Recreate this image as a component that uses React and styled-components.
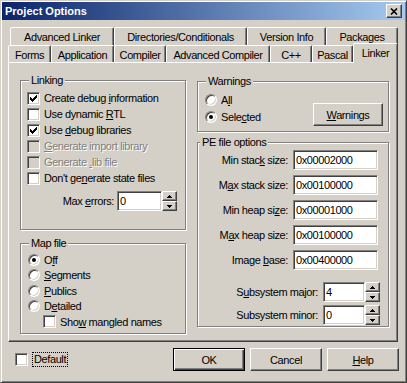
import React from "react";
import styled, { createGlobalStyle, css } from "styled-components";

const GlobalStyle = createGlobalStyle`
  html, body {
    margin: 0;
    padding: 0;
    background: #d4d0c8;
  }
  body {
    font-family: "Liberation Sans", Arial, sans-serif;
    font-size: 11px;
    letter-spacing: -0.4px;
    color: #000;
  }
  * {
    box-sizing: border-box;
  }
`;

// win2k bevels
const raised = css`
  border: 1px solid;
  border-color: #fff #404040 #404040 #fff;
  box-shadow: inset -1px -1px #808080, inset 1px 1px #d4d0c8;
`;

const sunken = css`
  border: 1px solid;
  border-color: #808080 #fff #fff #808080;
  box-shadow: inset 1px 1px #404040, inset -1px -1px #d4d0c8;
`;

const Window = styled.div`
  width: 407px;
  height: 383px;
  background: #d4d0c8;
  border: 1px solid;
  border-color: #d4d0c8 #404040 #404040 #d4d0c8;
  box-shadow: inset 1px 1px #fff, inset -1px -1px #808080;
  padding: 1px;
  display: flex;
  flex-direction: column;
`;

const TitleBar = styled.div`
  flex: none;
  height: 18px;
  display: flex;
  align-items: center;
  justify-content: space-between;
  padding: 0 3px 0 3px;
  background: linear-gradient(to right, #0a246a, #a6caf0);
  color: #fff;
  font-weight: bold;
  letter-spacing: 0;
`;

const CloseButton = styled.div`
  width: 16px;
  height: 14px;
  background: #d4d0c8;
  ${raised}
  display: flex;
  align-items: center;
  justify-content: center;
`;

const Body = styled.div`
  flex: 1;
  display: flex;
  flex-direction: column;
  padding: 7px 6px 0 6px;
`;

const TabRow = styled.div`
  display: flex;
  height: ${(p) => p.$h}px;
  padding-left: ${(p) => p.$indent || 0}px;
`;

const Tab = styled.div`
  flex: none;
  width: ${(p) => p.$w}px;
  height: 100%;
  display: flex;
  align-items: center;
  justify-content: center;
  padding-top: 1px;
  background: #d4d0c8;
  border: 1px solid;
  border-bottom: none;
  border-color: #fff #404040 transparent #fff;
  border-radius: 2px 2px 0 0;
  box-shadow: inset -1px 0 #808080;
  white-space: nowrap;

  ${(p) =>
    p.$active &&
    css`
      position: relative;
      z-index: 3;
      margin-top: -2px;
      height: calc(100% + 3px);
      padding-bottom: 2px;
    `}
`;

const Panel = styled.div`
  position: relative;
  z-index: 1;
  height: 280px;
  margin-right: 1px;
  border: 1px solid;
  border-color: #fff #404040 #404040 #fff;
  box-shadow: inset -1px -1px #808080;
  padding: 11px 8px 0 11px;
  display: grid;
  grid-template-columns: 166px 192px;
  column-gap: 11px;
  align-items: start;
`;

const Column = styled.div`
  display: flex;
  flex-direction: column;
`;

const Group = styled.fieldset`
  margin: ${(p) => p.$top || 0}px 0 0 0;
  padding: ${(p) => p.$pad};
  border: 1px solid #808080;
  box-shadow: 1px 1px 0 #fff, inset 1px 1px 0 #fff;
  min-width: 0;
`;

const Legend = styled.legend`
  padding: 0 2px;
  margin-left: 2px;
  line-height: 13px;
  background: #d4d0c8;
`;

const Option = styled.div`
  display: flex;
  align-items: center;
  gap: 4px;
  height: ${(p) => p.$h || 16}px;
  padding-left: ${(p) => p.$indent || 0}px;
  white-space: nowrap;
  color: ${(p) => (p.$disabled ? "#808080" : "#000")};
  text-shadow: ${(p) => (p.$disabled ? "1px 1px 0 #fff" : "none")};
`;

const CheckBox = styled.span`
  flex: none;
  width: 13px;
  height: 13px;
  ${sunken}
  background: ${(p) => (p.$disabled ? "#d4d0c8" : "#fff")};
  display: flex;
  align-items: center;
  justify-content: center;
`;

const RadioDot = styled.span`
  flex: none;
  width: 12px;
  height: 12px;
  margin-left: 1px;
  border-radius: 50%;
  border: 1px solid;
  border-color: #808080 #fff #fff #808080;
  box-shadow: inset 1px 1px #404040, inset -1px -1px #d4d0c8;
  background: #fff;
  display: flex;
  align-items: center;
  justify-content: center;

  &::after {
    content: "";
    display: ${(p) => (p.$on ? "block" : "none")};
    width: 4px;
    height: 4px;
    border-radius: 50%;
    background: #000;
  }
`;

const FieldRow = styled.div`
  display: flex;
  align-items: center;
  justify-content: flex-end;
  gap: ${(p) => p.$gap}px;
  height: 20px;
  margin-top: ${(p) => p.$top || 0}px;
  padding-right: ${(p) => p.$right}px;
  white-space: nowrap;
`;

const Field = styled.div`
  width: ${(p) => p.$w}px;
  height: 20px;
  ${sunken}
  background: #fff;
  padding: 0 2px;
  display: flex;
  align-items: center;
`;

const Spin = styled.div`
  display: flex;
  align-items: center;
`;

const Spinner = styled.div`
  width: 15px;
  height: 20px;
  display: flex;
  flex-direction: column;
`;

const SpinButton = styled.div`
  flex: 1;
  background: #d4d0c8;
  ${raised}
  display: flex;
  align-items: center;
  justify-content: center;
`;

const WarningsBody = styled.div`
  display: flex;
  align-items: flex-end;
  justify-content: space-between;
`;

const RadioStack = styled.div`
  display: flex;
  flex-direction: column;
  gap: 1px;
`;

const Button = styled.div`
  width: ${(p) => p.$w || 72}px;
  height: 23px;
  margin-bottom: ${(p) => p.$drop || 0}px;
  background: #d4d0c8;
  ${raised}
  display: flex;
  align-items: center;
  justify-content: center;

  ${(p) =>
    p.$default &&
    css`
      border: 1px solid #000;
      box-shadow: inset 1px 1px #fff, inset -1px -1px #404040,
        inset -2px -2px #808080;
    `}
`;

const Footer = styled.div`
  display: flex;
  align-items: center;
  height: 23px;
  margin-top: 6px;
`;

const DefaultOption = styled.div`
  display: flex;
  align-items: center;
  gap: 5px;
  margin-left: 7px;
  margin-right: auto;
`;

const FocusText = styled.span`
  outline: 1px dotted #000;
  padding: 0 1px;
  line-height: 13px;
`;

const ButtonBar = styled.div`
  display: flex;
  gap: 5px;
`;

const backTabs = [
  ["Advanced Linker", 104],
  ["Directories/Conditionals", 133],
  ["Version Info", 79],
  ["Packages", 72],
];

const frontTabs = [
  ["Forms", 43],
  ["Application", 63],
  ["Compiler", 52],
  ["Advanced Compiler", 104],
  ["C++", 42],
  ["Pascal", 41],
  ["Linker", 45],
];

const Tick = () => (
  <svg width="7" height="7" viewBox="0 0 7 7" shapeRendering="crispEdges">
    <path
      d="M0 2h1v1h1v1h1v-1h1v-1h1v-1h1v-1h1v3h-1v1h-1v1h-1v1h-1v1h-1v-1h-1v-1h-1z"
      fill="#000"
    />
  </svg>
);

const Check = ({ checked, disabled, children, indent }) => (
  <Option $disabled={disabled} $indent={indent}>
    <CheckBox $disabled={disabled}>{checked && <Tick />}</CheckBox>
    <span>{children}</span>
  </Option>
);

const Radio = ({ on, children, h }) => (
  <Option $h={h}>
    <RadioDot $on={on} />
    <span>{children}</span>
  </Option>
);

const Arrow = ({ down }) => (
  <svg width="5" height="3" viewBox="0 0 5 3" shapeRendering="crispEdges">
    <path
      d={down ? "M0 0h5v1h-1v1h-1v1h-1v-1h-1v-1h-1z" : "M2 0h1v1h1v1h1v1H0V2h1V1h1z"}
      fill="#000"
    />
  </svg>
);

const SpinField = ({ w, value }) => (
  <Spin>
    <Field $w={w}>{value}</Field>
    <Spinner>
      <SpinButton>
        <Arrow />
      </SpinButton>
      <SpinButton>
        <Arrow down />
      </SpinButton>
    </Spinner>
  </Spin>
);

const peFields = [
  [<>Min stac<u>k</u> size:</>, "0x00002000"],
  [<>M<u>a</u>x stack size:</>, "0x00100000"],
  [<>Min heap si<u>z</u>e:</>, "0x00001000"],
  [<>M<u>a</u>x heap size:</>, "0x00100000"],
  [<>Image <u>b</u>ase:</>, "0x00400000"],
];

export default function App() {
  return (
    <>
      <GlobalStyle />
      <Window>
        <TitleBar>
          <span>Project Options</span>
          <CloseButton>
            <svg width="8" height="7" viewBox="0 0 8 7">
              <path d="M1 0.5l6 6M7 0.5l-6 6" stroke="#000" strokeWidth="1.6" />
            </svg>
          </CloseButton>
        </TitleBar>

        <Body>
          <TabRow $h={18} $indent={2}>
            {backTabs.map(([label, w]) => (
              <Tab key={label} $w={w}>
                {label}
              </Tab>
            ))}
          </TabRow>
          <TabRow $h={17}>
            {frontTabs.map(([label, w]) => (
              <Tab key={label} $w={w} $active={label === "Linker"}>
                {label}
              </Tab>
            ))}
          </TabRow>

          <Panel>
            <Column>
              <Group $pad="3px 0 18px 6px">
                <Legend>Linking</Legend>
                <Check checked>
                  Create debug <u>i</u>nformation
                </Check>
                <Check>
                  Use dynamic <u>R</u>TL
                </Check>
                <Check checked>
                  Use <u>d</u>ebug libraries
                </Check>
                <Check disabled>
                  <u>G</u>enerate import library
                </Check>
                <Check disabled>
                  Generate <u>.</u>lib file
                </Check>
                <Check>
                  Don't ge<u>n</u>erate state files
                </Check>
                <FieldRow $gap={3} $right={8} $top={5}>
                  <span>
                    Max <u>e</u>rrors:
                  </span>
                  <SpinField w={45} value="0" />
                </FieldRow>
              </Group>

              <Group $top={7} $pad="2px 0 3px 6px">
                <Legend>Map file</Legend>
                <Radio on h={15.5}>
                  O<u>f</u>f
                </Radio>
                <Radio h={15.5}>
                  <u>S</u>egments
                </Radio>
                <Radio h={15.5}>
                  <u>P</u>ublics
                </Radio>
                <Radio h={15.5}>
                  D<u>e</u>tailed
                </Radio>
                <Option $h={15.5} $indent={16}>
                  <CheckBox />
                  <span>
                    Sho<u>w</u> mangled names
                  </span>
                </Option>
              </Group>
            </Column>

            <Column>
              <Group $top={1} $pad="4px 5px 6px 6px">
                <Legend>Warnings</Legend>
                <WarningsBody>
                  <RadioStack>
                    <Radio>
                      A<u>l</u>l
                    </Radio>
                    <Radio on>
                      Sele<u>c</u>ted
                    </Radio>
                  </RadioStack>
                  <Button $w={70} $drop={-1}>
                    <span>
                      <u>W</u>arnings
                    </span>
                  </Button>
                </WarningsBody>
              </Group>

              <Group $top={4} $pad="1px 0 1px 0">
                <Legend>PE file options</Legend>
                {peFields.map(([label, value], i) => (
                  <FieldRow key={i} $gap={5} $right={10} $top={i ? 5 : 0}>
                    <span>{label}</span>
                    <Field $w={85}>{value}</Field>
                  </FieldRow>
                ))}
                <FieldRow $gap={5} $right={8} $top={12}>
                  <span>
                    S<u>u</u>bsystem major:
                  </span>
                  <SpinField w={42} value="4" />
                </FieldRow>
                <FieldRow $gap={5} $right={8} $top={3}>
                  <span>Subsystem minor:</span>
                  <SpinField w={42} value="0" />
                </FieldRow>
              </Group>
            </Column>
          </Panel>

          <Footer>
            <DefaultOption>
              <CheckBox />
              <FocusText>Default</FocusText>
            </DefaultOption>
            <ButtonBar>
              <Button $default>OK</Button>
              <Button>Cancel</Button>
              <Button>
                <span>
                  <u>H</u>elp
                </span>
              </Button>
            </ButtonBar>
          </Footer>
        </Body>
      </Window>
    </>
  );
}
